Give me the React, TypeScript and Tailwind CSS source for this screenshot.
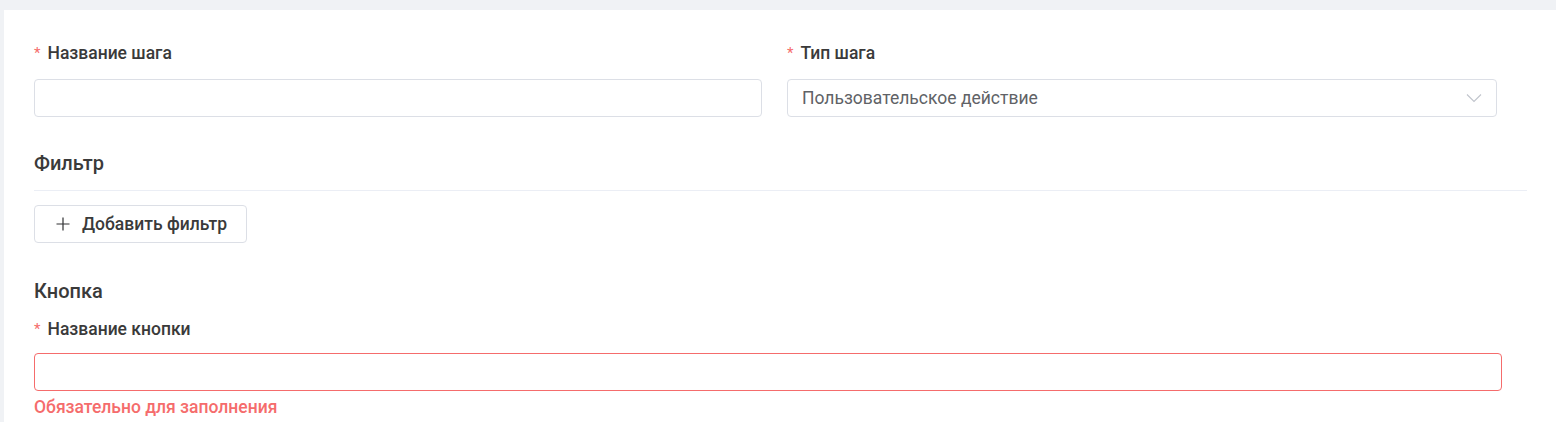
import React from 'react';

function Label({ text }: { text: string }) {
  return (
    <div className="flex items-center h-[22px] text-[17.5px] font-medium text-[#3a3a3a]">
      <span className="text-[#f56c6c] mr-[7px] text-[15px] font-normal">*</span>
      {text}
    </div>
  );
}

export default function App() {
  return (
    <div className="min-h-[422px] bg-[#f0f2f5] pt-[10px] pl-[4px] font-['Roboto','Liberation_Sans',sans-serif]">
      <div className="bg-white min-h-[412px] pl-[30px] pr-[29px] pt-[32px]">
        <div className="grid grid-cols-[728px_710px] gap-x-[25px]">
          <div>
            <Label text="Название шага" />
            <input
              type="text"
              className="mt-[15px] w-full h-[38px] px-[15px] border border-[#dcdfe6] rounded-[4px] outline-none text-[17.5px]"
            />
          </div>
          <div>
            <Label text="Тип шага" />
            <div className="mt-[15px] w-full h-[38px] pl-[14px] pr-[14px] border border-[#dcdfe6] rounded-[4px] flex items-center justify-between text-[17.5px] text-[#606266]">
              <span>Пользовательское действие</span>
              <svg width="16" height="10" viewBox="0 0 16 10" fill="none">
                <path d="M1 1.5 L8 8.5 L15 1.5" stroke="#c0c4cc" strokeWidth="1.1" />
              </svg>
            </div>
          </div>
        </div>

        <h3 className="mt-[34px] h-[24px] leading-[24px] text-[20px] font-medium text-[#3a3a3a]">Фильтр</h3>
        <div className="mt-[15px] h-px bg-[#ebeef5]" />
        <button className="mt-[14px] h-[38px] pl-[21px] pr-[19px] border border-[#dcdfe6] rounded-[4px] flex items-center gap-[12px] text-[17.5px] font-medium text-[#3a3a3a] bg-white">
          <svg width="14" height="14" viewBox="0 0 14 14" fill="none">
            <path d="M7 0.5 V13.5 M0.5 7 H13.5" stroke="#303133" strokeWidth="1.2" />
          </svg>
          Добавить фильтр
        </button>

        <h3 className="mt-[36px] h-[24px] leading-[24px] text-[20px] font-medium text-[#3a3a3a]">Кнопка</h3>
        <div className="mt-[15px]">
          <Label text="Название кнопки" />
        </div>
        <input
          type="text"
          className="mt-[13px] w-[1468px] h-[38px] px-[15px] border border-[#f56c6c] rounded-[4px] outline-none text-[17.5px]"
        />
        <div className="mt-[6px] h-[20px] leading-[20px] text-[17.5px] font-medium text-[#f56c6c]">
          Обязательно для заполнения
        </div>
      </div>
    </div>
  );
}
